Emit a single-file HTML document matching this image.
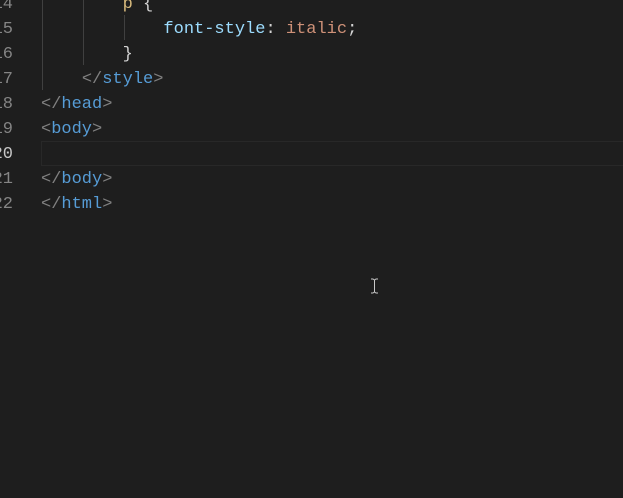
<!DOCTYPE html>
<html><head><style>
body{margin:0;width:623px;height:498px;background:#1e1e1e;overflow:hidden;position:relative;font-family:"Liberation Mono",monospace;font-size:17px}
.l{position:absolute;left:0;height:25px;line-height:25px;white-space:pre;width:623px}
.n{position:absolute;right:610px;color:#858585;text-align:right}
.c{position:absolute;left:41px}
.t{color:#569cd6}.p{color:#808080}.k{color:#d7ba7d}.a{color:#9cdcfe}.v{color:#ce9178}.w{color:#d4d4d4}
.g{position:absolute;width:1px;background:#404040}
</style></head><body>
<div class="g" style="left:42px;top:0;height:90px"></div>
<div class="g" style="left:83px;top:0;height:65px"></div>
<div class="g" style="left:124px;top:15px;height:25px"></div>
<div style="position:absolute;left:41px;top:141px;width:590px;height:23px;border:1px solid #282828"></div>
<div class="l" style="top:-8px"><span class="n">14</span><span class="c">        <span class="k">p</span><span class="w"> {</span></span></div>
<div class="l" style="top:17px"><span class="n">15</span><span class="c">            <span class="a">font-style</span><span class="w">: </span><span class="v">italic</span><span class="w">;</span></span></div>
<div class="l" style="top:42px"><span class="n">16</span><span class="c">        <span class="w">}</span></span></div>
<div class="l" style="top:67px"><span class="n">17</span><span class="c">    <span class="p">&lt;/</span><span class="t">style</span><span class="p">&gt;</span></span></div>
<div class="l" style="top:92px"><span class="n">18</span><span class="c"><span class="p">&lt;/</span><span class="t">head</span><span class="p">&gt;</span></span></div>
<div class="l" style="top:117px"><span class="n">19</span><span class="c"><span class="p">&lt;</span><span class="t">body</span><span class="p">&gt;</span></span></div>
<div class="l" style="top:142px"><span class="n" style="color:#c6c6c6">20</span></div>
<div class="l" style="top:167px"><span class="n">21</span><span class="c"><span class="p">&lt;/</span><span class="t">body</span><span class="p">&gt;</span></span></div>
<div class="l" style="top:192px"><span class="n">22</span><span class="c"><span class="p">&lt;/</span><span class="t">html</span><span class="p">&gt;</span></span></div>
<svg style="position:absolute;left:370px;top:278px" width="9" height="16"><path d="M1 1h2l1.5 1l1.5-1h2M4.5 2v12M1 15h2l1.5-1l1.5 1h2" stroke="#c8c8c8" fill="none" stroke-width="1"/></svg>
</body></html>
